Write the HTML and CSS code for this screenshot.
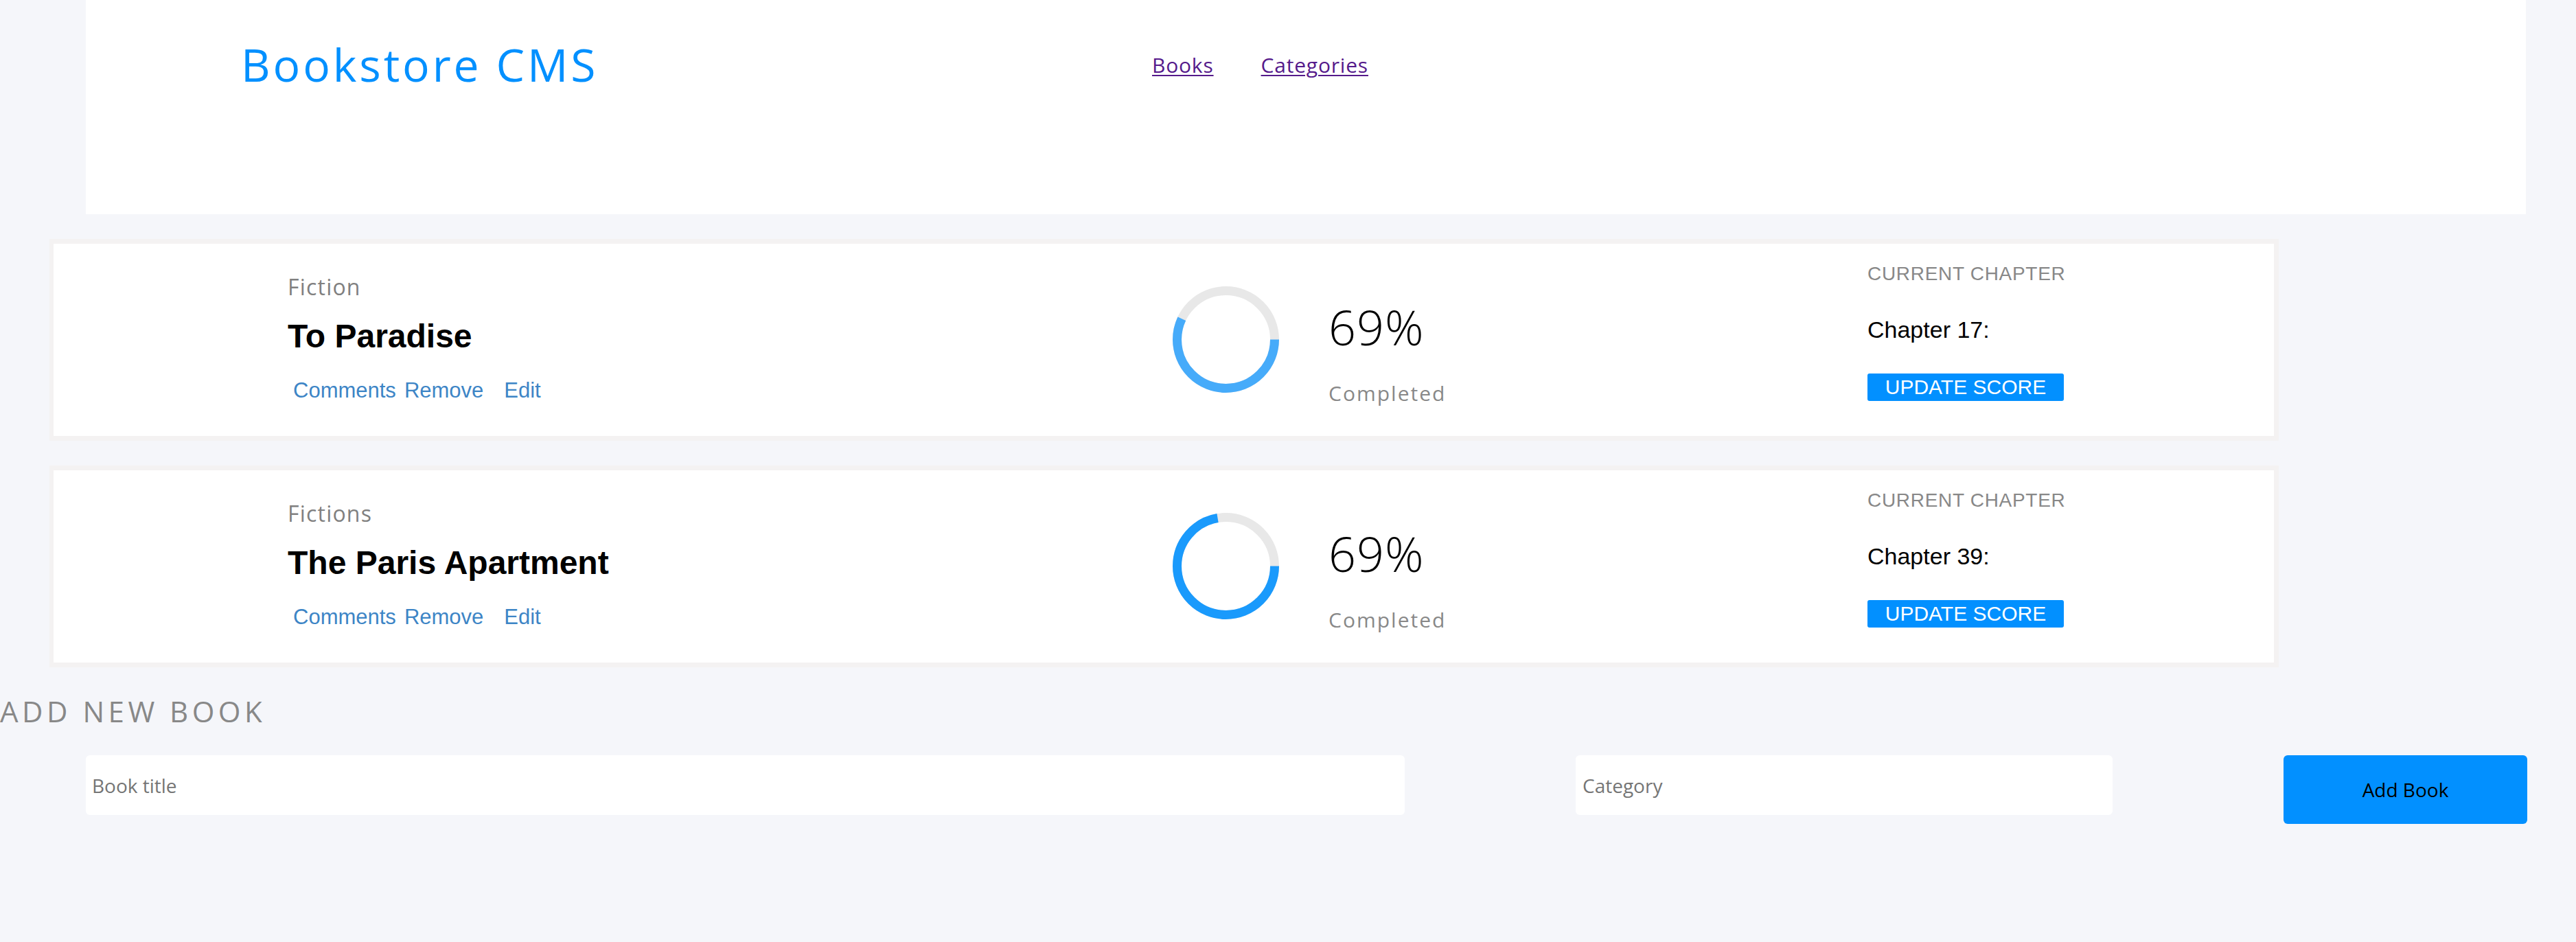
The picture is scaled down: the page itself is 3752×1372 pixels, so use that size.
FILE: index.html
```html
<!DOCTYPE html>
<html lang="en">
<head>
<meta charset="utf-8">
<title>Bookstore CMS</title>
<link rel="stylesheet" href="styles.css">
</head>
<body>
<header class="site-header">
  <h1 class="logo">Bookstore CMS</h1>
  <nav class="nav">
    <a class="nav-link" href="#books">Books</a>
    <a class="nav-link" href="#categories">Categories</a>
  </nav>
</header>
<main>
  <ul class="book-list">
    <li class="book-card">
      <div class="book-info">
        <p class="genre">Fiction</p>
        <h2 class="book-title">To Paradise</h2>
        <div class="actions">
          <button class="action action-comments" type="button">Comments</button>
          <button class="action action-remove" type="button">Remove</button>
          <button class="action" type="button">Edit</button>
        </div>
      </div>
      <div class="ring">
        <svg width="155" height="155" viewBox="0 0 155 155">
          <circle class="ring-track" cx="77.5" cy="77.5" r="71"></circle>
          <circle class="ring-bar ring-bar-light" cx="77.5" cy="77.5" r="71" style="stroke-dasharray: 254 446"></circle>
        </svg>
      </div>
      <div class="progress-text">
        <p class="percent">69%</p>
        <p class="completed">Completed</p>
      </div>
      <div class="chapter">
        <p class="chapter-label">CURRENT CHAPTER</p>
        <p class="chapter-name">Chapter 17:</p>
        <button class="update-btn" type="button">UPDATE SCORE</button>
      </div>
    </li>
    <li class="book-card">
      <div class="book-info">
        <p class="genre">Fictions</p>
        <h2 class="book-title">The Paris Apartment</h2>
        <div class="actions">
          <button class="action action-comments" type="button">Comments</button>
          <button class="action action-remove" type="button">Remove</button>
          <button class="action" type="button">Edit</button>
        </div>
      </div>
      <div class="ring">
        <svg width="155" height="155" viewBox="0 0 155 155">
          <circle class="ring-track" cx="77.5" cy="77.5" r="71"></circle>
          <circle class="ring-bar" cx="77.5" cy="77.5" r="71" style="stroke-dasharray: 322 446"></circle>
        </svg>
      </div>
      <div class="progress-text">
        <p class="percent">69%</p>
        <p class="completed">Completed</p>
      </div>
      <div class="chapter">
        <p class="chapter-label">CURRENT CHAPTER</p>
        <p class="chapter-name">Chapter 39:</p>
        <button class="update-btn" type="button">UPDATE SCORE</button>
      </div>
    </li>
  </ul>
  <section class="add-book">
    <h2 class="add-title">ADD NEW BOOK</h2>
    <form class="add-form">
      <input class="field field-title" type="text" placeholder="Book title">
      <input class="field field-category" type="text" placeholder="Category">
      <button class="add-btn" type="button">Add Book</button>
    </form>
  </section>
</main>
</body>
</html>
```

FILE: styles.css
```css
* {
  box-sizing: border-box;
}

html, body {
  margin: 0;
  padding: 0;
}

body {
  background: #f5f6fa;
  min-height: 100vh;
  font-family: "Open Sans", "Noto Sans", sans-serif;
}

p, h1, h2 {
  margin: 0;
}

/* ---------- header ---------- */
.site-header {
  margin-left: 125px;
  width: 3554px;
  height: 312px;
  background: #ffffff;
  padding-left: 226px;
  display: grid;
  grid-template-columns: 1327px auto;
  align-items: start;
}

.logo {
  padding-top: 53px;
  font-family: "Open Sans", sans-serif;
  font-weight: 400;
  font-size: 66px;
  line-height: 80px;
  letter-spacing: 3.9px;
  color: #0290ff;
}

.nav {
  padding-top: 77px;
  display: flex;
  gap: 69px;
}

.nav-link {
  font-family: "Open Sans", sans-serif;
  font-size: 30px;
  line-height: 36px;
  letter-spacing: 0.8px;
  color: #551a8b;
  text-decoration: underline;
  text-underline-offset: 3px;
  text-decoration-thickness: 2px;
}

/* ---------- book cards ---------- */
.book-list {
  list-style: none;
  margin: 36px 0 0;
  padding: 0;
  display: flex;
  flex-direction: column;
  gap: 36px;
}

.book-card {
  margin-left: 72px;
  width: 3247px;
  height: 294px;
  background: #ffffff;
  border: 7px solid #f4f2f2;
  border-left-width: 6px;
  padding-left: 341px;
  display: flex;
  align-items: flex-start;
}

.book-info {
  width: 1289px;
  padding-top: 43px;
}

.genre {
  font-family: "Open Sans", sans-serif;
  font-size: 32px;
  line-height: 40px;
  letter-spacing: 1.2px;
  color: #808080;
}

.book-title {
  margin-top: 24px;
  font-family: "Liberation Sans", Arial, sans-serif;
  font-weight: 700;
  font-size: 48px;
  line-height: 56px;
  color: #000000;
}

.actions {
  margin-top: 33px;
  display: flex;
  padding-left: 8px;
}

.action {
  border: none;
  background: none;
  padding: 0;
  margin: 0;
  font-family: "Liberation Sans", Arial, sans-serif;
  font-size: 31px;
  line-height: 36px;
  color: #3d85c6;
  cursor: pointer;
}

.action-comments {
  margin-right: 12px;
}

.action-remove {
  margin-right: 30px;
}

.ring {
  width: 155px;
  height: 155px;
  margin-top: 62px;
}

.ring svg {
  display: block;
}

.ring-track {
  fill: none;
  stroke: #e8e8e8;
  stroke-width: 13;
}

.ring-bar {
  fill: none;
  stroke: #1a9afc;
  stroke-width: 13;
  stroke-linecap: butt;
}

.ring-bar-light {
  stroke: #46abfa;
}

.progress-text {
  width: 789px;
  margin-left: 68px;
  padding-left: 4px;
  padding-top: 81px;
}

.percent {
  font-family: "Open Sans", sans-serif;
  font-weight: 300;
  font-size: 70px;
  line-height: 80px;
  color: #000000;
  letter-spacing: 1px;
}

.completed {
  margin-top: 39px;
  font-family: "Open Sans", sans-serif;
  font-size: 30px;
  line-height: 36px;
  letter-spacing: 2px;
  color: #888888;
}

.chapter {
  padding-top: 28px;
  display: flex;
  flex-direction: column;
  align-items: flex-start;
}

.chapter-label {
  font-family: "Liberation Sans", Arial, sans-serif;
  font-size: 28px;
  line-height: 32px;
  letter-spacing: 0.7px;
  color: #888888;
}

.chapter-name {
  margin-top: 45px;
  font-family: "Liberation Sans", Arial, sans-serif;
  font-size: 34px;
  line-height: 40px;
  color: #000000;
}

.update-btn {
  margin-top: 44px;
  height: 40px;
  width: 286px;
  padding: 0;
  border: none;
  border-radius: 3px;
  background: #0290ff;
  color: #ffffff;
  font-family: "Liberation Sans", Arial, sans-serif;
  font-size: 30px;
  line-height: 40px;
  cursor: pointer;
}

/* ---------- add book ---------- */
.add-book {
  margin-top: 39px;
}

.add-title {
  font-family: "Open Sans", sans-serif;
  font-weight: 400;
  font-size: 42px;
  line-height: 50px;
  letter-spacing: 5.5px;
  color: #888888;
}

.add-form {
  margin: 39px 0 0 125px;
  display: flex;
  align-items: flex-start;
  gap: 249px;
}

.field {
  height: 87px;
  border: none;
  border-radius: 6px;
  background: #ffffff;
  padding: 0 9px;
  font-family: "Open Sans", sans-serif;
  font-size: 28px;
  color: #333333;
  outline: none;
}

.field::placeholder {
  color: #757575;
}

.field-title {
  width: 1921px;
}

.field-category {
  width: 782px;
  padding-left: 10px;
}

.add-btn {
  width: 355px;
  height: 100px;
  border: none;
  border-radius: 6px;
  background: #0290ff;
  color: #000000;
  font-family: "Open Sans", sans-serif;
  font-size: 28px;
  cursor: pointer;
}
```
